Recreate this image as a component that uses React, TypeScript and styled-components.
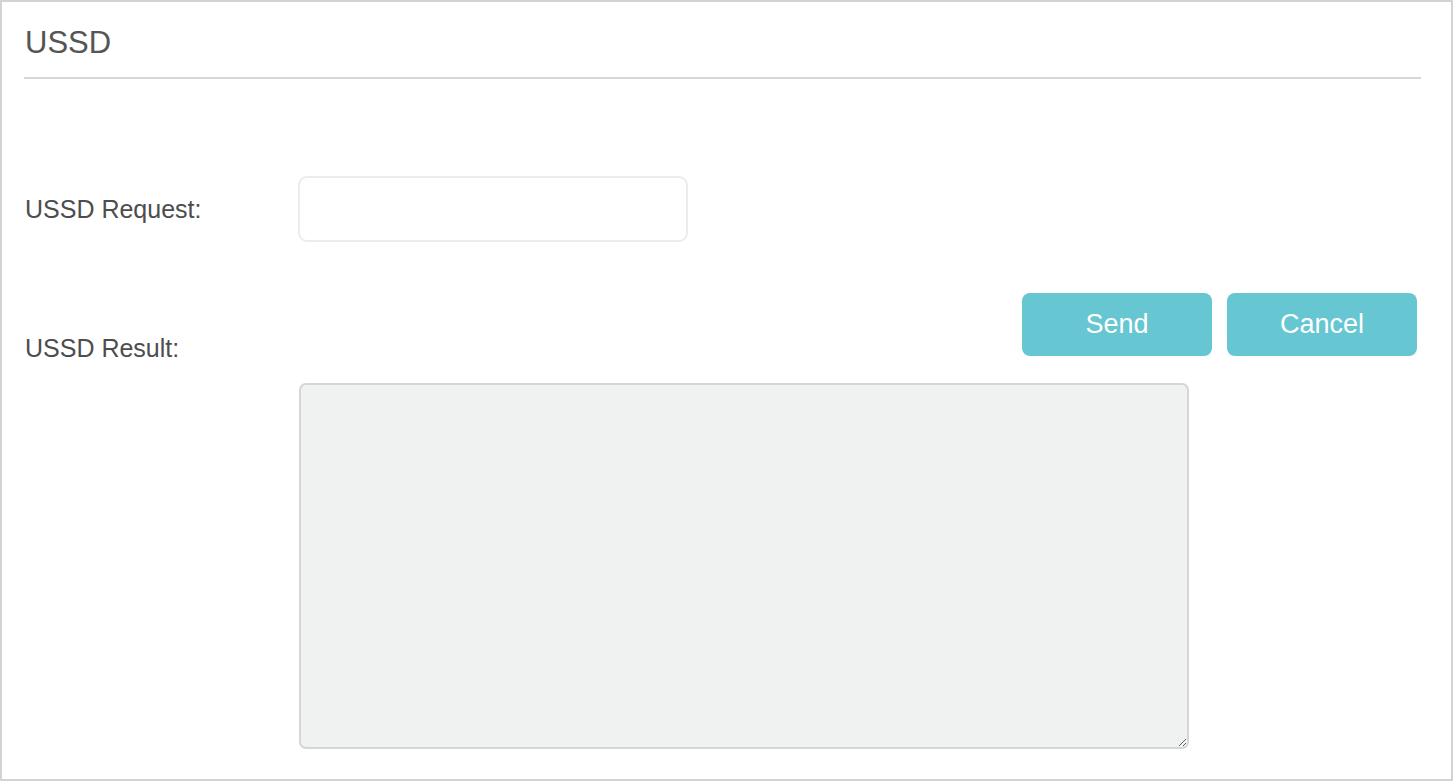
import React from "react";
import styled, { createGlobalStyle } from "styled-components";

const Global = createGlobalStyle`
  html, body { margin: 0; padding: 0; background: #ffffff; }
  body { font-family: "Liberation Sans", Arial, sans-serif; }
  * { box-sizing: border-box; }
`;

const Frame = styled.div`
  width: 1453px;
  height: 781px;
  border: 2px solid #d3d3d3;
  padding: 0 30px 0 22px;
  background: #fff;
`;

const Header = styled.div`
  padding-top: 23px;
  height: 77px;
  border-bottom: 2px solid #d6d6d6;
`;

const Title = styled.h1`
  margin: 0 0 0 1px;
  font-size: 31px;
  line-height: 36px;
  font-weight: normal;
  color: #555555;
`;

const Form = styled.div`
  display: grid;
  grid-template-columns: 274px 1fr;
  padding-top: 97px;
`;

const Label = styled.label<{ $top?: number }>`
  font-size: 25px;
  line-height: 30px;
  color: #4d4d4d;
  padding-left: 1px;
  padding-top: ${(p) => p.$top ?? 0}px;
  align-self: ${(p) => (p.$top !== undefined ? "start" : "center")};
`;

const ResultLabel = styled(Label)`
  grid-column: 1;
  grid-row: 2;
`;

const Input = styled.input`
  width: 390px;
  height: 66px;
  border: 2px solid #ececec;
  border-radius: 9px;
  background: #fff;
  outline: none;
  padding: 0 14px;
  font-size: 22px;
  font-family: inherit;
`;

const ButtonRow = styled.div`
  grid-column: 2;
  grid-row: 2;
  margin-top: 51px;
  display: flex;
  justify-content: flex-end;
  align-items: flex-start;
  gap: 15px;
  height: 70px;
  margin-right: 4px;
`;

const Button = styled.button`
  width: 190px;
  height: 63px;
  border: none;
  border-radius: 8px;
  background: #66c6d1;
  color: #ffffff;
  font-family: "Liberation Sans", Arial, sans-serif;
  font-size: 27px;
  cursor: pointer;
  padding: 0;
`;

const ResultArea = styled.textarea`
  grid-column: 2;
  grid-row: 3;
  margin-top: 20px;
  margin-left: 1px;
  width: 890px;
  height: 366px;
  border: 2px solid #d6d6d6;
  border-radius: 7px;
  background: #f0f1f1;
  resize: both;
  outline: none;
  font-family: inherit;
  font-size: 20px;
  padding: 10px;
`;

export default function App() {
  return (
    <>
      <Global />
      <Frame>
        <Header>
          <Title>USSD</Title>
        </Header>
        <Form>
          <Label>USSD Request:</Label>
          <Input type="text" />
          <ResultLabel $top={91}>USSD Result:</ResultLabel>
          <ButtonRow>
            <Button>Send</Button>
            <Button>Cancel</Button>
          </ButtonRow>
          <ResultArea readOnly />
        </Form>
      </Frame>
    </>
  );
}
